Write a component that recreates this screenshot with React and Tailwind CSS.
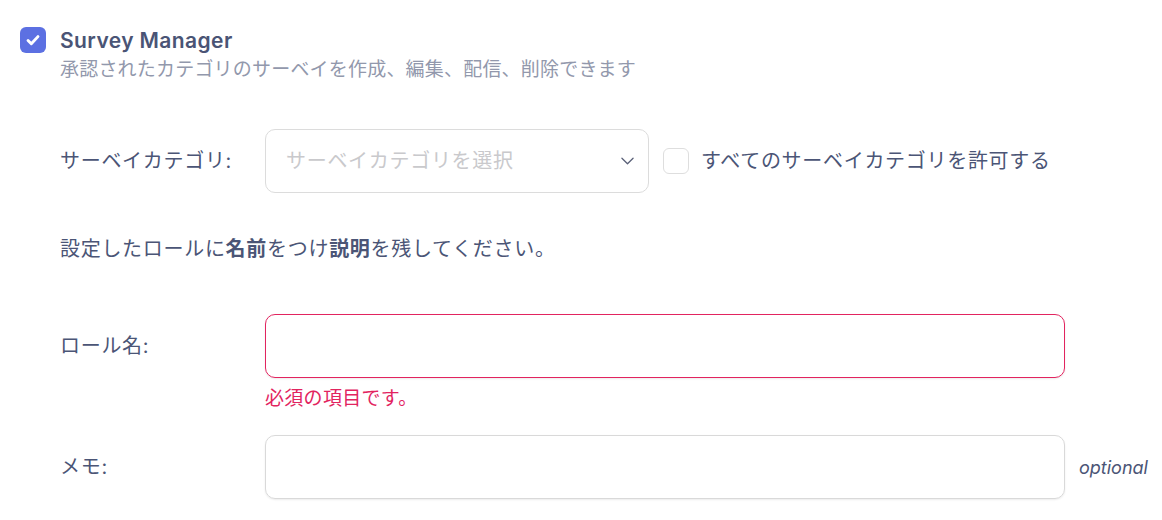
import React from "react";

const font = {
  fontFamily: '"Inter", "Noto Sans CJK JP", sans-serif',
};

function CheckIcon() {
  return (
    <svg viewBox="0 0 16 16" className="w-[18px] h-[18px]" fill="none">
      <path d="M3.6 8.4l2.9 2.9 5.9-6.3" stroke="white" strokeWidth="2.6" strokeLinecap="round" strokeLinejoin="round" />
    </svg>
  );
}

function Chevron() {
  return (
    <svg viewBox="0 0 14 8" className="w-[13px] h-[8px]" fill="none">
      <path d="M1 1l6 6 6-6" stroke="#5a6078" strokeWidth="1.4" strokeLinecap="round" strokeLinejoin="round" />
    </svg>
  );
}

export default function App() {
  return (
    <div className="w-[1162px] h-[520px] bg-white text-[#4b5576] overflow-hidden tracking-[0.7px]" style={font}>
      {/* role header */}
      <div className="flex items-start gap-[14px] pl-[20px] pt-[27px]">
        <div className="w-[26px] h-[26px] rounded-[6px] bg-[#5c70e2] flex items-center justify-center shrink-0">
          <CheckIcon />
        </div>
        <div className="flex flex-col">
          <div className="text-[21px] leading-[28px] font-semibold text-[#4a5475] tracking-[0.4px]">Survey Manager</div>
          <div className="text-[19px] leading-[28px] text-[#9298ac] mt-[1px] tracking-[0.2px]">
            承認されたカテゴリのサーベイを作成、編集、配信、削除できます
          </div>
        </div>
      </div>

      <div className="pl-[60px]">
        {/* category row */}
        <div className="flex items-center mt-[45px]">
          <div className="w-[205px] text-[20px]">サーベイカテゴリ:</div>
          <div className="w-[384px] h-[64px] rounded-[10px] border border-[#dcdcdc] flex items-center justify-between pl-[20px] pr-[14px]">
            <span className="text-[20px] text-[#c9c9cc]">サーベイカテゴリを選択</span>
            <Chevron />
          </div>
          <div className="w-[26px] h-[26px] rounded-[6px] border border-[#dedede] ml-[14px]" />
          <span className="text-[20px] ml-[12px]">すべてのサーベイカテゴリを許可する</span>
        </div>

        <div className="text-[20px] leading-[28px] mt-[42px]">
          設定したロールに<b className="font-bold">名前</b>をつけ<b className="font-bold">説明</b>を残してください。
        </div>

        {/* role name */}
        <div className="flex items-start mt-[51px]">
          <div className="w-[205px] text-[20px] leading-[64px]">ロール名:</div>
          <div className="flex flex-col">
            <div className="w-[800px] h-[64px] rounded-[10px] border border-[#e2245f] shadow-[0_1px_2px_rgba(0,0,0,0.08)]" />
            <div className="text-[19px] leading-[28px] text-[#e2245f] mt-[7px] tracking-[0.3px]">必須の項目です。</div>
          </div>
        </div>

        {/* memo */}
        <div className="flex items-center mt-[22px]">
          <div className="w-[205px] text-[20px]">メモ:</div>
          <div className="w-[800px] h-[64px] rounded-[10px] border border-[#d9d9d9] shadow-[0_1px_2px_rgba(0,0,0,0.08)]" />
          <span className="ml-[14px] text-[18px] italic text-[#4b5576] tracking-normal">optional</span>
        </div>
      </div>
    </div>
  );
}
